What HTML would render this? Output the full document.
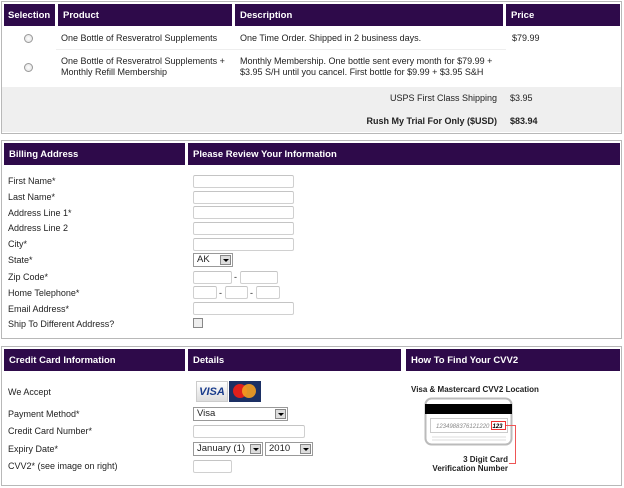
<!DOCTYPE html>
<html><head><meta charset="utf-8"><style>
*{margin:0;padding:0;box-sizing:border-box}
body{width:624px;height:488px;background:#fff;font-family:"Liberation Sans",Arial,sans-serif;font-size:9px;color:#222;position:relative;overflow:hidden}
.a{position:absolute}
.box{position:absolute;border:1px solid #b8b8b8;background:#fff}
.h{position:absolute;background:#2e0a4a;color:#fff;font-weight:bold;font-size:9.5px;padding-left:5px;display:flex;align-items:center}
.t{position:absolute;white-space:nowrap;line-height:11px}
.in{position:absolute;border:1px solid #d0d0d0;border-top-color:#c4c4c4;border-radius:2px;background:#fff;height:13px}
.sel{position:absolute;border:1px solid #999;background:#fff;height:14px;font-size:9.5px;padding-left:3px;line-height:12px}
.sel i{position:absolute;right:1px;top:1px;width:11px;height:10px;background:#ddd;border:1px solid #888}
.sel i:after{content:"";position:absolute;left:2px;top:3px;border-left:3px solid transparent;border-right:3px solid transparent;border-top:3px solid #000}
.radio{position:absolute;width:9px;height:9px;border-radius:50%;border:1px solid #999;background:radial-gradient(#fff,#ddd)}
</style></head><body>

<div class="box" style="left:1px;top:1px;width:621px;height:133px"></div>
<div class="h" style="left:4px;top:4px;width:51px;height:22px;padding-left:4px">Selection</div>
<div class="h" style="left:58px;top:4px;width:174px;height:22px">Product</div>
<div class="h" style="left:235px;top:4px;width:268px;height:22px">Description</div>
<div class="h" style="left:506px;top:4px;width:114px;height:22px">Price</div>
<div class="a" style="left:56px;top:49px;width:450px;height:1px;background:#eee"></div>
<div class="radio" style="left:24px;top:34px"></div>
<div class="radio" style="left:24px;top:63px"></div>
<div class="t" style="left:61px;top:33px">One Bottle of Resveratrol Supplements</div>
<div class="t" style="left:240px;top:33px">One Time Order. Shipped in 2 business days.</div>
<div class="t" style="left:512px;top:33px">$79.99</div>
<div class="t" style="left:61px;top:56px">One Bottle of Resveratrol Supplements +<br>Monthly Refill Membership</div>
<div class="t" style="left:240px;top:56px">Monthly Membership. One bottle sent every month for $79.99 +<br>$3.95 S/H until you cancel. First bottle for $9.99 + $3.95 S&amp;H</div>
<div class="a" style="left:2px;top:87px;width:619px;height:45px;background:#efefef"></div>
<div class="t" style="left:300px;top:93px;width:197px;text-align:right">USPS First Class Shipping</div>
<div class="t" style="left:510px;top:93px">$3.95</div>
<div class="t" style="left:300px;top:116px;width:197px;text-align:right;font-weight:bold">Rush My Trial For Only ($USD)</div>
<div class="t" style="left:510px;top:116px;font-weight:bold">$83.94</div>

<div class="box" style="left:1px;top:140px;width:621px;height:199px"></div>
<div class="h" style="left:4px;top:143px;width:181px;height:22px">Billing Address</div>
<div class="h" style="left:188px;top:143px;width:432px;height:22px">Please Review Your Information</div>
<div class="t" style="left:8px;top:176px">First Name*</div>
<div class="t" style="left:8px;top:192px">Last Name*</div>
<div class="t" style="left:8px;top:208px">Address Line 1*</div>
<div class="t" style="left:8px;top:223px">Address Line 2</div>
<div class="t" style="left:8px;top:239px">City*</div>
<div class="t" style="left:8px;top:255px">State*</div>
<div class="t" style="left:8px;top:272px">Zip Code*</div>
<div class="t" style="left:8px;top:288px">Home Telephone*</div>
<div class="t" style="left:8px;top:304px">Email Address*</div>
<div class="t" style="left:8px;top:319px">Ship To Different Address?</div>
<div class="in" style="left:193px;top:175px;width:101px"></div>
<div class="in" style="left:193px;top:191px;width:101px"></div>
<div class="in" style="left:193px;top:206px;width:101px"></div>
<div class="in" style="left:193px;top:222px;width:101px"></div>
<div class="in" style="left:193px;top:238px;width:101px"></div>
<div class="sel" style="left:193px;top:253px;width:40px">AK<i></i></div>
<div class="in" style="left:193px;top:271px;width:39px"></div>
<div class="t" style="left:234px;top:272px">-</div>
<div class="in" style="left:240px;top:271px;width:38px"></div>
<div class="in" style="left:193px;top:286px;width:24px"></div>
<div class="t" style="left:219px;top:288px">-</div>
<div class="in" style="left:225px;top:286px;width:23px"></div>
<div class="t" style="left:250px;top:288px">-</div>
<div class="in" style="left:256px;top:286px;width:24px"></div>
<div class="in" style="left:193px;top:302px;width:101px"></div>
<div class="a" style="left:193px;top:318px;width:10px;height:10px;border:1px solid #888;background:#eee"></div>

<div class="box" style="left:1px;top:346px;width:621px;height:140px"></div>
<div class="h" style="left:4px;top:349px;width:181px;height:22px">Credit Card Information</div>
<div class="h" style="left:188px;top:349px;width:213px;height:22px">Details</div>
<div class="h" style="left:406px;top:349px;width:214px;height:22px">How To Find Your CVV2</div>
<div class="t" style="left:8px;top:387px">We Accept</div>
<div class="t" style="left:8px;top:409px">Payment Method*</div>
<div class="t" style="left:8px;top:426px">Credit Card Number*</div>
<div class="t" style="left:8px;top:444px">Expiry Date*</div>
<div class="t" style="left:8px;top:461px">CVV2* (see image on right)</div>
<div class="a" style="left:196px;top:381px;width:32px;height:21px;background:linear-gradient(#fff,#ddd);border:1px solid #ccc;color:#1a3c8c;font-weight:bold;font-style:italic;font-size:11px;text-align:center;line-height:20px">VISA</div>
<div class="a" style="left:229px;top:381px;width:32px;height:21px;background:#1c3064">
<div class="a" style="left:4px;top:3px;width:14px;height:14px;border-radius:50%;background:#e0201c"></div>
<div class="a" style="left:13px;top:3px;width:14px;height:14px;border-radius:50%;background:#f5a020;opacity:.9"></div></div>
<div class="sel" style="left:193px;top:407px;width:95px">Visa<i></i></div>
<div class="in" style="left:193px;top:425px;width:112px"></div>
<div class="sel" style="left:193px;top:442px;width:70px">January (1)<i></i></div>
<div class="sel" style="left:265px;top:442px;width:48px">2010<i></i></div>
<div class="in" style="left:193px;top:460px;width:39px"></div>
<div class="t" style="left:411px;top:384px;font-size:8px;font-weight:bold">Visa &amp; Mastercard CVV2 Location</div>
<svg class="a" style="left:420px;top:396px" width="120" height="76">
<rect x="5.5" y="2.5" width="86" height="46" rx="6" fill="#fff" stroke="#bbb" stroke-width="2"/>
<rect x="5" y="8" width="87" height="10" fill="#000"/>
<rect x="10.5" y="22.5" width="77" height="14" fill="#fff" stroke="#ccc"/>
<text x="16" y="32" font-size="6" font-style="italic" fill="#888" font-family="Liberation Sans">1234988376121220</text>
<rect x="71.5" y="25.5" width="14" height="8" fill="none" stroke="#e33"/>
<text x="72.5" y="32" font-size="6" font-weight="bold" font-style="italic" fill="#000" font-family="Liberation Sans">123</text>
<path d="M86 29.5H95.5V67.5H89" fill="none" stroke="#e55"/>
<line x1="12" y1="41" x2="86" y2="41" stroke="#ddd"/><line x1="12" y1="44" x2="86" y2="44" stroke="#ddd"/>
</svg>
<div class="t" style="left:430px;top:455px;width:78px;text-align:right;font-size:8px;font-weight:bold;line-height:9px">3 Digit Card<br>Verification Number</div>
</body></html>
